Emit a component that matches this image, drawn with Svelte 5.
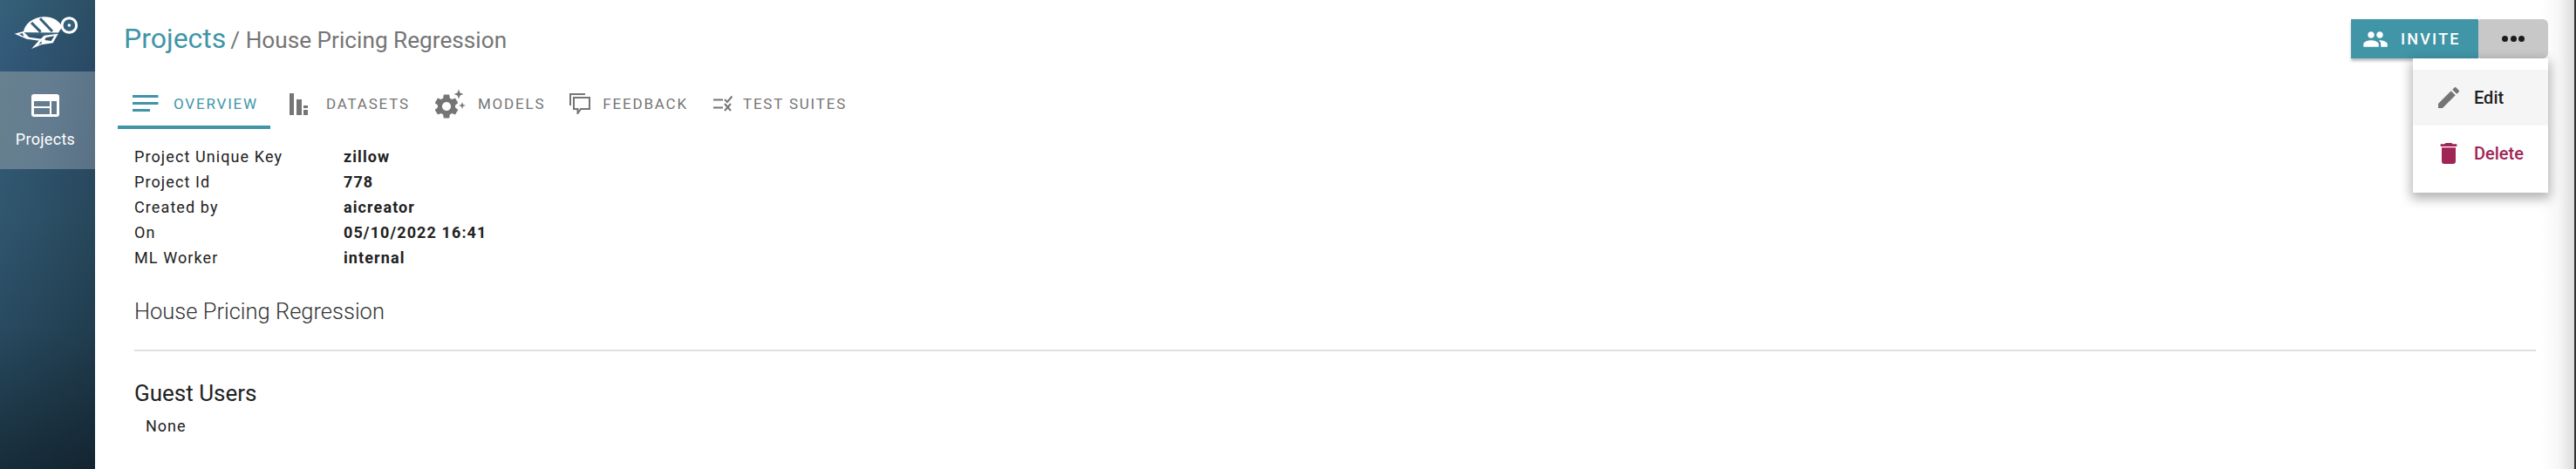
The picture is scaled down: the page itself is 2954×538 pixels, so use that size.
<script>
  const tabs = [
    { label: 'Overview', icon: 'overview', active: true },
    { label: 'Datasets', icon: 'datasets' },
    { label: 'Models', icon: 'models' },
    { label: 'Feedback', icon: 'feedback' },
    { label: 'Test suites', icon: 'tests' }
  ];
  const details = [
    ['Project Unique Key', 'zillow'],
    ['Project Id', '778'],
    ['Created by', 'aicreator'],
    ['On', '05/10/2022 16:41'],
    ['ML Worker', 'internal']
  ];
</script>

<div class="app">
  <nav class="side">
    <div class="logo">
      <svg width="90" height="55" viewBox="0 0 270 165">
        <!-- shell -->
        <path fill="#fff" d="M50 82C55 50 85 30 120 28C150 27 172 40 184 62L170 84Z"/>
        <path stroke="#34607a" stroke-width="9" fill="none" d="M78 48L110 80M108 34L150 78M45 87H172"/>
        <!-- tail -->
        <path fill="#fff" fill-rule="evenodd" d="M20 86L50 78L70 98L118 105L116 112L62 104ZM36 87L52 96L48 84Z"/>
        <!-- flippers -->
        <path fill="#fff" fill-rule="evenodd" d="M122 92L170 86L152 118L112 124L78 138L102 112ZM128 99L124 108L146 111L157 94ZM112 112L102 125L114 118Z"/>
        <circle cx="208" cy="57" r="25" fill="#34607a" stroke="#fff" stroke-width="9"/>
        <circle cx="208" cy="57" r="5.500" fill="#fff"/>
      </svg>
    </div>
    <div class="nav-item">
      <svg width="32" height="26" viewBox="0 0 32 26"><path fill="#fff" fill-rule="evenodd" d="M3 0H29A3 3 0 0 1 32 3V23A3 3 0 0 1 29 26H3A3 3 0 0 1 0 23V3A3 3 0 0 1 3 0ZM3 8V14H21V8ZM23 8V23H29V8ZM3 16V23H21V16Z"/></svg>
      <span>Projects</span>
    </div>
  </nav>

  <main class="main">
    <header class="head">
      <h1><a href="#top">Projects</a><span class="crumb">/ House Pricing Regression</span></h1>
      <div class="actions">
        <button class="invite">
          <svg width="30" height="30" viewBox="0 0 24 24"><path fill="#fff" d="M16 11c1.66 0 2.99-1.34 2.99-3S17.66 5 16 5c-1.66 0-3 1.34-3 3s1.34 3 3 3zm-8 0c1.66 0 2.99-1.34 2.99-3S9.66 5 8 5C6.34 5 5 6.34 5 8s1.34 3 3 3zm0 2c-2.33 0-7 1.17-7 3.500V19h14v-2.500c0-2.330-4.670-3.500-7-3.500zm8 0c-.29 0-.62.02-.97.05 1.160.84 1.970 1.970 1.970 3.450V19h6v-2.500c0-2.330-4.670-3.500-7-3.500z"/></svg>
          Invite
        </button>
        <button class="more" aria-label="More"><i></i><i></i><i></i></button>
        <div class="menu">
          <div class="menu-item hover">
            <svg width="32" height="32" viewBox="0 0 24 24"><path fill="#757575" d="M3 17.25V21h3.75L17.81 9.94l-3.750-3.750L3 17.25zM20.71 7.04c.39-.39.39-1.020 0-1.410l-2.340-2.340c-.39-.39-1.020-.39-1.410 0l-1.830 1.830 3.750 3.750 1.830-1.830z"/></svg>
            <span>Edit</span>
          </div>
          <div class="menu-item danger">
            <svg width="32" height="32" viewBox="0 0 24 24"><path fill="#a02556" d="M6 19c0 1.100.9 2 2 2h8c1.100 0 2-.9 2-2V7H6v12zM19 4h-3.500l-1-1h-5l-1 1H5v2h14V4z"/></svg>
            <span>Delete</span>
          </div>
        </div>
      </div>
    </header>

    <div class="tabs">
      {#each tabs as tab}
        <div class="tab" class:active={tab.active}>
          {#if tab.icon === 'overview'}
            <svg width="36" height="36" viewBox="0 0 36 36"><path fill="#4095a7" d="M3 8H32.500V11H3ZM3 16H32.500V19H3ZM3 24H23V27H3Z"/></svg>
          {:else if tab.icon === 'datasets'}
            <svg width="36" height="36" viewBox="0 0 36 36"><path fill="#757575" d="M8 6H13V31H8ZM16 13H22V31H16ZM24 20H29V23H24ZM24 25H29V31H24Z"/></svg>
          {:else if tab.icon === 'models'}
            <svg width="36" height="36" viewBox="0 0 36 36">
              <path fill="#757575" transform="translate(-2.800 4.200) scale(1.400)" d="M19.14,12.94c0.04-0.3,0.06-0.61,0.06-0.94c0-0.32-0.02-0.64-0.07-0.94l2.03-1.58c0.18-0.14,0.23-0.41,0.12-0.61l-1.92-3.32c-0.12-0.22-0.37-0.29-0.59-0.22l-2.39,0.96c-0.5-0.38-1.03-0.7-1.62-0.94L14.4,2.81c-0.04-0.24-0.24-0.41-0.48-0.41h-3.84c-0.24,0-0.43,0.17-0.47,0.41L9.25,5.35C8.66,5.59,8.12,5.92,7.63,6.29L5.24,5.33c-0.22-0.08-0.47,0-0.59,0.22L2.74,8.87C2.62,9.08,2.66,9.34,2.86,9.48l2.03,1.58C4.84,11.36,4.8,11.69,4.8,12s0.02,0.64,0.07,0.94l-2.03,1.58c-0.18,0.14-0.23,0.41-0.12,0.61l1.92,3.32c0.12,0.22,0.37,0.29,0.59,0.22l2.39-0.96c0.5,0.38,1.03,0.7,1.62,0.94l0.36,2.54c0.05,0.24,0.24,0.41,0.48,0.41h3.84c0.24,0,0.44-0.17,0.47-0.41l0.36-2.54c0.59-0.24,1.13-0.56,1.62-0.94l2.39,0.96c0.22,0.08,0.47,0,0.59-0.22l1.92-3.32c0.12-0.22,0.07-0.47-0.12-0.61L19.14,12.94z M12,15.6c-1.98,0-3.6-1.62-3.6-3.6s1.62-3.6,3.6-3.6s3.6,1.62,3.6,3.6S13.98,15.6,12,15.6z"/>
              <path fill="#757575" d="M28 1.500L29.500 5.500L33.500 7L29.500 8.500L28 12.500L26.500 8.500L22.500 7L26.500 5.500ZM32 16L33 19L36 20L33 21L32 24L31 21L28 20L31 19Z"/>
            </svg>
          {:else if tab.icon === 'feedback'}
            <svg width="24" height="24" viewBox="0 0 24 24" fill="none" stroke="#757575" stroke-width="2"><path d="M1 14V1H18"/><path d="M5 5H23V18H13L9.500 23V18H5Z"/></svg>
          {:else}
            <svg class="tests-icon" width="23" height="23" viewBox="0 0 23 23" fill="none" stroke="#757575" stroke-width="2"><path d="M1 6.500H12M1 15.500H12M14 6L17 9L22.500 2.500M14 11L21 19M21 11L14 19"/></svg>
          {/if}
          <span>{tab.label}</span>
        </div>
      {/each}
    </div>

    <div class="details">
      {#each details as row}
        <div class="row"><span class="key">{row[0]}</span><b>{row[1]}</b></div>
      {/each}
    </div>

    <h2>House Pricing Regression</h2>
    <hr />
    <h3>Guest Users</h3>
    <p class="none">None</p>
  </main>
</div>

<style>
  :global(body) {
    margin: 0;
    background: #fff;
    font-family: Roboto, "Liberation Sans", sans-serif;
  }
  .app {
    display: flex;
    height: 538px;
    overflow: hidden;
    position: relative;
  }
  /* page edge shading on the far right */
  .app::after {
    content: "";
    position: absolute;
    top: 0;
    bottom: 0;
    right: 0;
    width: 40px;
    background: linear-gradient(90deg, rgba(0, 0, 0, 0) 0%, rgba(0, 0, 0, 0.03) 50%, rgba(0, 0, 0, 0.14) 96%, #333 96%);
    pointer-events: none;
  }
  .side {
    width: 109px;
    flex: none;
    background:
      linear-gradient(90deg, rgba(0, 0, 0, 0), rgba(0, 0, 0, 0.18)),
      linear-gradient(180deg, #35607a 0%, #32597a 15%, #30576f 45%, #284a60 70%, #172c3a 100%);
    color: #fff;
  }
  .logo {
    height: 82px;
    padding: 10px;
    box-sizing: border-box;
  }
  .logo svg {
    display: block;
  }
  .nav-item {
    height: 112px;
    background: linear-gradient(100deg, #67818f 0%, #637c90 50%, #5a7184 100%);
    display: flex;
    flex-direction: column;
    align-items: center;
    padding: 26px 5px 0 0;
    box-sizing: border-box;
    gap: 15px;
  }
  .nav-item span {
    font-size: 18px;
    letter-spacing: 0.3px;
  }
  .main {
    flex: 1;
    min-width: 0;
    padding: 0 46px 0 26px;
  }
  .head {
    height: 88px;
    display: flex;
    justify-content: space-between;
    align-items: flex-start;
  }
  h1 {
    margin: 22px 0 0 7px;
    font-size: 26.200px;
    font-weight: 400;
    color: #757575;
    line-height: 44px;
  }
  h1 a {
    font-size: 32px;
    font-weight: 400;
    color: #4095a7;
    text-decoration: none;
  }
  .crumb {
    margin-left: 5px;
  }
  .actions {
    display: flex;
    position: relative;
    margin-top: 22px;
    margin-right: -14px;
    z-index: 1;
  }
  button {
    border: 0;
    font-family: inherit;
    height: 45px;
  }
  .invite {
    width: 146px;
    background: #4095a7;
    color: #fff;
    font-size: 18px;
    font-weight: 500;
    letter-spacing: 2.200px;
    text-transform: uppercase;
    display: flex;
    align-items: center;
    gap: 14px;
    padding: 0 0 0 13px;
    box-shadow: 0 3px 3px rgba(0, 0, 0, 0.25);
  }
  .more {
    width: 80px;
    background: #c8c8c8;
    border-radius: 3px 6px 6px 3px;
    display: flex;
    justify-content: center;
    align-items: center;
    gap: 2.500px;
  }
  .more i {
    width: 7px;
    height: 7px;
    border-radius: 50%;
    background: #1c1c1c;
  }
  .menu {
    position: absolute;
    top: 45px;
    right: 0;
    width: 155px;
    padding: 13px 0;
    background: #fff;
    box-shadow: 0 5px 12px 2px rgba(0, 0, 0, 0.3);
  }
  .menu-item {
    height: 64px;
    display: flex;
    align-items: center;
    padding-left: 25px;
    gap: 13px;
    font-size: 20px;
    font-weight: 500;
    color: #1f1f1f;
  }
  .hover {
    background: #f5f5f5;
  }
  .danger {
    color: #a02556;
  }
  .tabs {
    display: flex;
  }
  .tab {
    height: 60px;
    display: flex;
    align-items: center;
    gap: 14px;
    padding: 6px 14px 0;
    color: #757575;
    font-size: 17px;
    font-weight: 400;
    letter-spacing: 1.800px;
    text-transform: uppercase;
    border-bottom: 4px solid transparent;
    box-sizing: border-box;
  }
  .tab.active {
    color: #4095a7;
    border-bottom-color: #4095a7;
  }
  .tests-icon {
    margin-right: -2px;
  }
  .details {
    margin: 17.500px 0 0 19px;
  }
  .row {
    display: flex;
    height: 28.900px;
    align-items: center;
    font-size: 18px;
    letter-spacing: 1.100px;
    color: #212121;
  }
  .key {
    width: 240px;
  }
  b {
    font-weight: 700;
  }
  h2 {
    margin: 29px 0 0 19px;
    font-size: 25.500px;
    font-weight: 300;
    color: #333;
    line-height: 36px;
  }
  hr {
    margin: 26px 0 0 19px;
    border: 0;
    border-top: 2px solid #e0e0e0;
  }
  h3 {
    margin: 32px 0 0 19px;
    font-size: 26px;
    font-weight: 400;
    color: #212121;
    line-height: 32px;
  }
  .none {
    margin: 11px 0 0 32px;
    font-size: 18px;
    line-height: 22px;
    letter-spacing: 1px;
    color: #212121;
  }
</style>
